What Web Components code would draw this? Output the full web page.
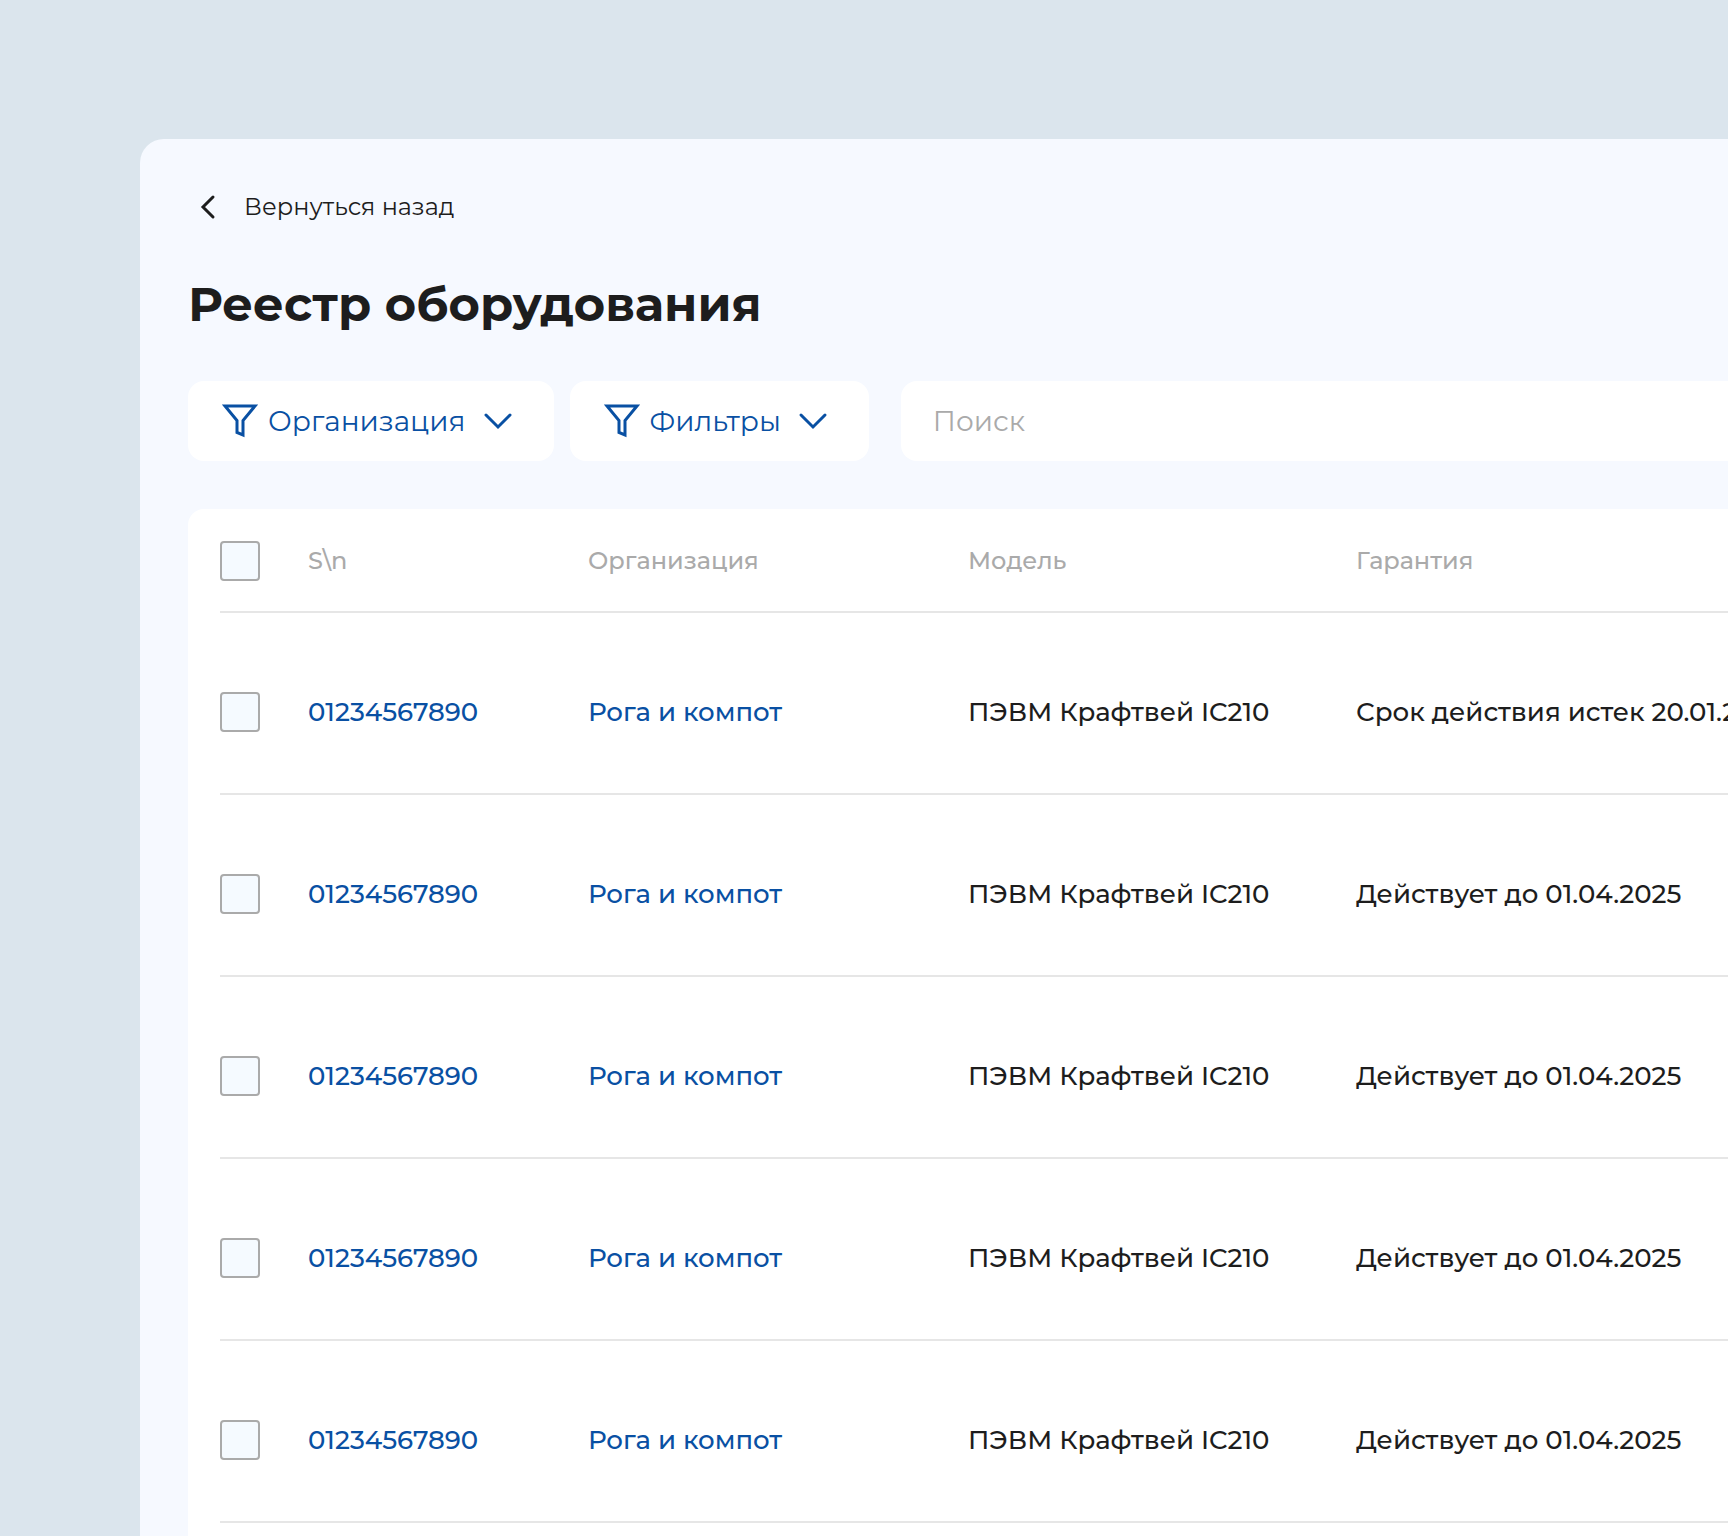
<!DOCTYPE html>
<html lang="ru">
<head>
  <meta charset="UTF-8">
  <meta name="viewport" content="width=device-width, initial-scale=1.0">
  <title>Реестр оборудования</title>
  <style>
    :root {
      --color-page: #dbe5ed;
      --color-panel: #f6f9ff;
      --color-text: #1d1d1d;
      --color-link: #0950a3;
      --color-muted: #aaaaaa;
      --color-line: #e6e6e6;
    }

    body {
      margin: 0;
      background-color: var(--color-page);
      color: var(--color-text);
      font-family: Montserrat, Inter, "Open Sans", sans-serif;
    }
  </style>
</head>
<body>
  <registry-page>
    <back-link slot="back" href="#">Вернуться назад</back-link>
    <span slot="title">Реестр оборудования</span>
    <filter-button slot="filters">Организация</filter-button>
    <filter-button slot="filters">Фильтры</filter-button>
    <search-field slot="search" placeholder="Поиск"></search-field>
    <equipment-table></equipment-table>
  </registry-page>

  <script>
    class RegistryPage extends HTMLElement {
      constructor () {
        super()
        this.shadow = this.attachShadow({ mode: 'open' })
      }

      connectedCallback () {
        this.render()
      }

      render () {
        this.shadow.innerHTML =
          /* html */`
          <style>
            :host {
              box-sizing: border-box;
              display: flex;
              height: 100vh;
              overflow: hidden;
              padding: 139px 0 0 140px;
            }
            main {
              background-color: var(--color-panel);
              border-top-left-radius: 24px;
              box-sizing: border-box;
              display: flex;
              flex: 1;
              flex-direction: column;
              min-width: 0;
              padding: 48px 0 0 48px;
            }
            h1 {
              font-size: 48px;
              font-weight: 700;
              line-height: 58px;
              margin: 48px 0;
            }
            .toolbar {
              display: flex;
              gap: 32px;
              margin-bottom: 48px;
            }
            .filters {
              display: flex;
              gap: 16px;
            }
            .search {
              flex: 1;
              min-width: 0;
            }
          </style>
          <main>
            <slot name="back"></slot>
            <h1><slot name="title"></slot></h1>
            <div class="toolbar">
              <div class="filters"><slot name="filters"></slot></div>
              <div class="search"><slot name="search"></slot></div>
            </div>
            <slot></slot>
          </main>
        `
      }
    }
    customElements.define('registry-page', RegistryPage)

    class BackLink extends HTMLElement {
      constructor () {
        super()
        this.shadow = this.attachShadow({ mode: 'open' })
      }

      connectedCallback () {
        this.render()
      }

      render () {
        this.shadow.innerHTML =
          /* html */`
          <style>
            :host {
              display: flex;
            }
            a {
              align-items: center;
              color: inherit;
              display: flex;
              font-size: 24px;
              font-weight: 400;
              gap: 16px;
              line-height: 40px;
              text-decoration: none;
            }
            svg {
              height: 40px;
              width: 40px;
            }
          </style>
          <a href="${this.getAttribute('href')}">
            <svg viewBox="0 0 40 40" fill="none" stroke="currentColor" stroke-width="3" stroke-linecap="round" aria-hidden="true"><path d="M25 10L15 20L25 30"/></svg>
            <slot></slot>
          </a>
        `
      }
    }
    customElements.define('back-link', BackLink)

    class FilterButton extends HTMLElement {
      constructor () {
        super()
        this.shadow = this.attachShadow({ mode: 'open' })
      }

      connectedCallback () {
        this.render()
      }

      render () {
        this.shadow.innerHTML =
          /* html */`
          <style>
            :host {
              display: block;
            }
            button {
              align-items: center;
              background-color: white;
              border: none;
              border-radius: 16px;
              color: var(--color-link);
              cursor: pointer;
              display: flex;
              font: inherit;
              font-size: 28px;
              font-weight: 400;
              height: 80px;
              padding: 0 36px 0 32px;
            }
            .funnel {
              height: 40px;
              margin-right: 8px;
              width: 40px;
            }
            .chevron {
              height: 40px;
              margin-left: 12px;
              width: 40px;
            }
          </style>
          <button type="button">
            <svg class="funnel" viewBox="0 0 40 40" fill="none" stroke="currentColor" stroke-width="3" aria-hidden="true"><path d="M5 5H35L23 19.500V34L17 31.500V19.500Z"/></svg>
            <span><slot></slot></span>
            <svg class="chevron" viewBox="0 0 40 40" fill="none" stroke="currentColor" stroke-width="3" stroke-linecap="round" aria-hidden="true"><path d="M8 14L20 26L32 14"/></svg>
          </button>
        `
      }
    }
    customElements.define('filter-button', FilterButton)

    class SearchField extends HTMLElement {
      constructor () {
        super()
        this.shadow = this.attachShadow({ mode: 'open' })
      }

      connectedCallback () {
        this.render()
      }

      render () {
        const placeholder = this.getAttribute('placeholder')

        this.shadow.innerHTML =
          /* html */`
          <style>
            :host {
              display: block;
            }
            input {
              background-color: white;
              border: none;
              border-radius: 16px 0 0 16px;
              box-sizing: border-box;
              color: var(--color-text);
              font: inherit;
              font-size: 28px;
              font-weight: 400;
              height: 80px;
              padding: 0 32px;
              width: 100%;
            }
            input::placeholder {
              color: var(--color-muted);
              opacity: 1;
            }
          </style>
          <input type="search" placeholder="${placeholder}" aria-label="${placeholder}">
        `
      }
    }
    customElements.define('search-field', SearchField)

    class EquipmentTable extends HTMLElement {
      constructor () {
        super()
        this.shadow = this.attachShadow({ mode: 'open' })
        this.rows = [
          'Срок действия истек 20.01.2025',
          'Действует до 01.04.2025',
          'Действует до 01.04.2025',
          'Действует до 01.04.2025',
          'Действует до 01.04.2025'
        ].map(warranty => ({
          serial: '01234567890',
          organization: 'Рога и компот',
          model: 'ПЭВМ Крафтвей IC210',
          warranty
        }))
      }

      connectedCallback () {
        this.render()
      }

      render () {
        this.shadow.innerHTML =
          /* html */`
          <style>
            :host {
              background-color: white;
              border-top-left-radius: 16px;
              display: block;
              flex: 1;
              overflow: hidden;
              padding-left: 32px;
            }
            table {
              border-collapse: separate;
              border-spacing: 0;
              table-layout: fixed;
              width: 100%;
            }
            .col-check {
              width: 88px;
            }
            .col-serial {
              width: 280px;
            }
            .col-organization {
              width: 380px;
            }
            .col-model {
              width: 388px;
            }
            th, td {
              border-bottom: 2px solid var(--color-line);
              font-weight: 500;
              line-height: 40px;
              text-align: left;
              vertical-align: top;
              white-space: nowrap;
            }
            th {
              color: var(--color-muted);
              font-size: 24px;
              padding: 32px 0 30px;
            }
            td {
              font-size: 26px;
              padding: 79px 0 61px;
            }
            a {
              color: var(--color-link);
              text-decoration: none;
            }
            input {
              appearance: none;
              background-color: #f5faff;
              border: 2px solid var(--color-muted);
              border-radius: 4px;
              box-sizing: border-box;
              cursor: pointer;
              display: block;
              height: 40px;
              margin: 0;
              width: 40px;
            }
            input:checked {
              background-color: var(--color-link);
            }
          </style>
          <table>
            <colgroup>
              <col class="col-check">
              <col class="col-serial">
              <col class="col-organization">
              <col class="col-model">
              <col>
            </colgroup>
            <thead>
              <tr>
                <th scope="col"><input type="checkbox" aria-label="Выбрать все"></th>
                <th scope="col">S\\n</th>
                <th scope="col">Организация</th>
                <th scope="col">Модель</th>
                <th scope="col">Гарантия</th>
              </tr>
            </thead>
            <tbody>
              ${this.rows.map(row => /* html */`
                <tr>
                  <td><input type="checkbox" aria-label="Выбрать ${row.serial}"></td>
                  <td><a href="#">${row.serial}</a></td>
                  <td><a href="#">${row.organization}</a></td>
                  <td>${row.model}</td>
                  <td>${row.warranty}</td>
                </tr>
              `).join('')}
            </tbody>
          </table>
        `
      }
    }
    customElements.define('equipment-table', EquipmentTable)
  </script>
</body>
</html>
